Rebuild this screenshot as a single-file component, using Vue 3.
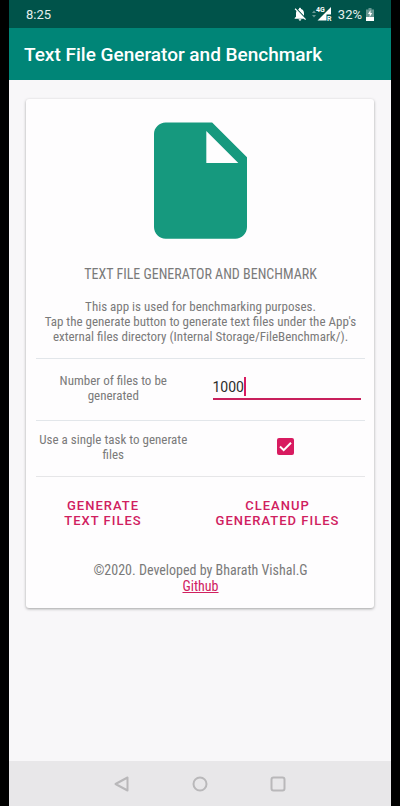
<script setup>
import { ref } from 'vue'

const fileCount = ref('1000')
const singleTask = ref(true)
</script>

<template>
  <div class="device">
    <div class="status">
      <span>8:25</span>
      <div class="indicators">
        <svg class="bell" viewBox="0 0 24 24" aria-hidden="true">
          <path d="M20 18.69L7.84 6.14 5.27 3.49 4 4.76l2.8 2.8v.01c-.52.99-.8 2.16-.8 3.42v5l-2 2v1h13.73l2 2L21 19.72l-1-1.03zM12 22c1.11 0 2-.89 2-2h-4c0 1.11.89 2 2 2zm6-7.32V11c0-3.08-1.64-5.64-4.5-6.32V4c0-.83-.67-1.5-1.5-1.5s-1.5.67-1.5 1.5v.68c-.15.03-.29.08-.42.12-.1.03-.2.07-.3.11h-.01c-.01 0-.01 0-.02.01-.23.09-.46.2-.68.31 0 0-.01 0-.01.01L18 14.68z" />
        </svg>
        <svg class="signal" viewBox="0 0 20 14" aria-hidden="true">
          <path class="dim" d="M0 6l2-2.500 2 2.500zM0 8l2 2.500 2-2.500z" />
          <path d="M19 0v7.500h-4.500V13.500H5.500z" />
          <text x="4" y="5">4G</text>
          <text x="15" y="13.500">R</text>
        </svg>
        <span>32%</span>
        <svg class="battery" viewBox="0 0 8 13" aria-hidden="true">
          <path class="dim" d="M2.500 0h3v1.500H8V9H0V1.500h2.500z" />
          <path d="M0 9h8v4H0zM4.500 2L2 6h1.700v3L6.200 5H4.500z" />
        </svg>
      </div>
    </div>

    <header class="appbar">
      <h1>Text File Generator and Benchmark</h1>
    </header>

    <main class="content">
      <section class="card">
        <svg class="file" viewBox="4 2 16 20" aria-hidden="true">
          <path d="M6 2c-1.100 0-2 .9-2 2v16c0 1.100.9 2 2 2h12c1.100 0 2-.9 2-2V8l-6-6H6zm7 7V3.500L18.500 9H13z" />
        </svg>
        <h2>TEXT FILE GENERATOR AND BENCHMARK</h2>
        <p class="about">
          This app is used for benchmarking purposes.<br>
          Tap the generate button to generate text files under the App's
          external files directory (Internal Storage/FileBenchmark/).
        </p>

        <div class="row count">
          <label for="count">Number of files to be generated</label>
          <div class="field">
            <input id="count" v-model="fileCount" type="text" inputmode="numeric" size="4">
            <i class="caret"></i>
          </div>
        </div>

        <div class="row task">
          <label for="single">Use a single task to generate files</label>
          <div class="tick">
            <input id="single" v-model="singleTask" type="checkbox">
            <svg viewBox="0 0 17 17" aria-hidden="true"><path d="M3 8.500l3.700 3.700L14 4.700" /></svg>
          </div>
        </div>

        <div class="actions">
          <button type="button">GENERATE<br>TEXT FILES</button>
          <button type="button">CLEANUP<br>GENERATED FILES</button>
        </div>

        <footer>
          <div>©2020. Developed by Bharath Vishal.G</div>
          <a href="#github">Github</a>
        </footer>
      </section>
    </main>

    <nav class="navbar" aria-label="System">
      <button type="button" aria-label="Back">
        <svg viewBox="0 0 16 16"><path d="M13.500 1.500v13L1.500 8z" /></svg>
      </button>
      <button type="button" aria-label="Home">
        <svg viewBox="0 0 16 16"><circle cx="8" cy="8" r="6.500" /></svg>
      </button>
      <button type="button" aria-label="Recent apps">
        <svg viewBox="0 0 16 16"><rect x="1.500" y="1.500" width="13" height="13" rx="2" /></svg>
      </button>
    </nav>
  </div>
</template>

<style>
body {
  background: #000;
}
</style>

<style scoped>
* {
  box-sizing: border-box;
}

.device {
  display: flex;
  flex-direction: column;
  min-height: 100vh;
  margin: 0 9px;
  background: #f8f7f9;
  font-family: "Roboto Condensed", "Liberation Sans Narrow", Roboto, sans-serif;
  color: #7a7a7a;
}

.status {
  display: flex;
  align-items: center;
  justify-content: space-between;
  height: 28px;
  padding: 0 17px;
  background: #00534a;
  color: #e6efed;
  font: 13px/28px Roboto, sans-serif;
}

.status span {
  padding-top: 2px;
}

.indicators {
  display: flex;
  align-items: center;
  gap: 4px;
}

.indicators svg {
  fill: #fff;
}

.bell {
  width: 16px;
  height: 16px;
}

.signal {
  width: 20px;
  height: 14px;
  margin-right: 2px;
}

.signal text {
  font: bold 7px Roboto, sans-serif;
}

.battery {
  width: 8px;
  height: 13px;
}

.dim {
  opacity: 0.4;
}

.appbar {
  display: flex;
  align-items: center;
  height: 52px;
  padding: 2px 15px 0;
  background: #008577;
}

h1 {
  margin: 0;
  color: #fff;
  font: 500 19px/24px Roboto, sans-serif;
}

.content {
  flex: 1;
  padding: 19px 17px;
}

.card {
  display: flex;
  flex-direction: column;
  padding: 23px 9px 14px 10px;
  border-radius: 3px;
  background: #fefdfe;
  box-shadow: 0 1px 3px rgba(0, 0, 0, 0.35);
  text-align: center;
}

.file {
  align-self: center;
  width: 93px;
  height: 117px;
  fill: #16997e;
}

h2 {
  margin: 27px 0 0;
  font-size: 14px;
  font-weight: 400;
  line-height: 16px;
}

.about {
  margin: 17px 0 14px;
  font-size: 13px;
  line-height: 15px;
}

.row {
  display: grid;
  grid-template-columns: 1fr 1fr;
  align-items: center;
  gap: 20px;
  border-top: 1px solid #e2e6ea;
  font-size: 13px;
  line-height: 15px;
}

.count {
  height: 62px;
}

.task {
  height: 57px;
  border-bottom: 1px solid #e6e6e8;
}

.row label {
  padding: 0 0 4px;
}

.field {
  display: flex;
  align-items: center;
  height: 28px;
  margin: 0 4px 8px 2px;
  padding-top: 4px;
  border-bottom: 2px solid #c8205c;
}

.field input {
  width: 31px;
  padding: 0;
  border: 0;
  outline: 0;
  background: none;
  color: #2c2c2c;
  font: 14px/18px Roboto, sans-serif;
}

.caret {
  width: 2px;
  height: 19px;
  background: #d81b60;
}

.tick {
  display: grid;
  justify-self: center;
  margin: 0 4px 4px 0;
}

.tick input,
.tick svg {
  grid-area: 1 / 1;
  width: 17px;
  height: 17px;
  margin: 0;
}

.tick input {
  appearance: none;
  border: 2px solid #757575;
  border-radius: 2px;
}

.tick input:checked {
  border-color: #d81b60;
  background: #d81b60;
}

.tick svg {
  fill: none;
  stroke: #fff;
  stroke-width: 2;
  pointer-events: none;
}

.actions {
  display: grid;
  grid-template-columns: 134px 1fr;
  gap: 20px;
  padding: 21px 0 0;
}

.actions button {
  padding: 0;
  border: 0;
  background: none;
  color: #d0205f;
  font: 500 13px/15px Roboto, sans-serif;
  letter-spacing: 1px;
  white-space: nowrap;
}

footer {
  margin-top: 34px;
  font-size: 14px;
  line-height: 16px;
}

footer a {
  color: #d0205f;
}

.navbar {
  display: flex;
  align-items: center;
  justify-content: center;
  gap: 62px;
  height: 45px;
  background: #e8e7e9;
}

.navbar button {
  display: flex;
  padding: 0;
  border: 0;
  background: none;
}

.navbar svg {
  width: 16px;
  height: 16px;
  fill: none;
  stroke: #b9b8ba;
  stroke-width: 2;
  stroke-linejoin: round;
}
</style>
